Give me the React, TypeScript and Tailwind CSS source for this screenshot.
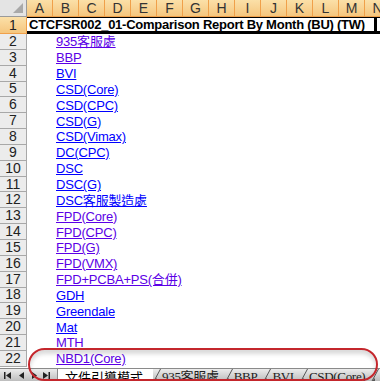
import React from "react";

const cols = ["A", "B", "C", "D", "E", "F", "G", "H", "I", "J", "K", "L", "M", "N"];

// visited links show violet, the rest plain blue
const links = [
  { text: "935客服處", v: true },
  { text: "BBP", v: true },
  { text: "BVI", v: false },
  { text: "CSD(Core)", v: false },
  { text: "CSD(CPC)", v: false },
  { text: "CSD(G)", v: false },
  { text: "CSD(Vimax)", v: false },
  { text: "DC(CPC)", v: false },
  { text: "DSC", v: false },
  { text: "DSC(G)", v: false },
  { text: "DSC客服製造處", v: false },
  { text: "FPD(Core)", v: true },
  { text: "FPD(CPC)", v: true },
  { text: "FPD(G)", v: true },
  { text: "FPD(VMX)", v: true },
  { text: "FPD+PCBA+PS(合併)", v: true },
  { text: "GDH", v: false },
  { text: "Greendale", v: false },
  { text: "Mat", v: false },
  { text: "MTH", v: true },
  { text: "NBD1(Core)", v: true },
];

const sheets = ["935客服處", "BBP", "BVI", "CSD(Core)"];

const font = { fontFamily: "'Liberation Sans', 'Noto Sans CJK TC', sans-serif" };
const serif = { fontFamily: "'Liberation Serif', 'Noto Sans CJK TC', serif" };

const NavArrows = () => (
  <svg width="58" height="13" viewBox="0 0 58 13" className="shrink-0">
    <rect x="4" y="3" width="1.5" height="7" fill="#222" />
    <path d="M6 6.5 L11 3 L11 10 Z" fill="#222" />
    <path d="M19 6.5 L24 3 L24 10 Z" fill="#222" />
    <path d="M37 6.5 L32 3 L32 10 Z" fill="#222" />
    <path d="M48 6.5 L43 3 L43 10 Z" fill="#222" />
    <rect x="48.5" y="3" width="1.5" height="7" fill="#222" />
    <rect x="57" y="0" width="1" height="13" fill="#8a8a8a" />
  </svg>
);

const Slash = () => (
  <svg width="8" height="13" viewBox="0 0 8 13" className="shrink-0">
    <path d="M0.5 13 L7.5 0" stroke="#555" strokeWidth="1" fill="none" />
    <path d="M0 13 L4 13 L4 9 Z" fill="#555" />
  </svg>
);

const App = () => {
  return (
    <div className="relative w-[380px] h-[381px] overflow-hidden bg-white flex flex-col" style={font}>
      {/* column headers */}
      <div className="flex h-[17px] shrink-0">
        <div className="relative w-[27px] shrink-0 bg-[#e4e4e4] border-r border-b border-[#9a9a9a]">
          <svg width="12" height="12" viewBox="0 0 12 12" className="absolute right-[2px] bottom-[2px]">
            <path d="M11 1 L11 11 L1 11 Z" fill="#a9a9a9" />
          </svg>
        </div>
        {cols.map((c) => (
          <div
            key={c}
            className="w-[26px] shrink-0 flex items-center justify-center text-[14px] text-[#333] bg-gradient-to-b from-[#fbe0a8] to-[#f5c67e] border-r border-b border-[#f0a04a]"
          >
            {c}
          </div>
        ))}
      </div>

      {/* row 1 */}
      <div className="flex h-[17px] shrink-0">
        <div className="w-[27px] shrink-0 flex items-center justify-center text-[14px] text-[#222] bg-gradient-to-b from-[#fbe0a8] to-[#f5c67e] border-r border-b border-[#f0a04a]">
          1
        </div>
        <div className="flex-1 border-t border-black border-b-[3px] flex items-center pl-[2px] pr-[3px] whitespace-nowrap">
          <span className="text-[13px] font-bold text-black leading-none tracking-[-0.25px]">
            CTCFSR002_01-Comparison Report By Month (BU) (TW)
          </span>
          <span className="ml-auto w-[3px] h-[14px] bg-black" />
        </div>
      </div>

      {/* rows 2..22 */}
      <div className="flex flex-col">
        {links.map((l, i) => (
          <div key={l.text} className="flex h-[15.85px] shrink-0">
            <div className="w-[27px] shrink-0 flex items-center justify-center text-[14px] text-[#222] bg-[#ececec] border-r border-b border-[#a8a8a8]">
              {i + 2}
            </div>
            <div className="flex-1 flex items-center pl-[29px] whitespace-nowrap">
              <span
                className={
                  "text-[13px] underline underline-offset-[1px] leading-none tracking-[-0.2px] " +
                  (l.v ? "text-[#5b00e6]" : "text-[#0000ff]")
                }
              >
                {l.text}
              </span>
            </div>
          </div>
        ))}
      </div>

      {/* sheet tabs */}
      <div className="absolute left-0 right-0 top-[368px] h-[13px] flex bg-gradient-to-b from-[#ececec] to-[#bdbdbd] border-t border-[#8a8a8a] text-[13px] leading-[13px] overflow-hidden">
        <NavArrows />
        <div className="bg-white pl-[7px] pt-[1px] text-black w-[95px] shrink-0 whitespace-nowrap" style={{ fontFamily: "'Noto Sans CJK TC', sans-serif" }}>
          文件引導模式
        </div>
        {sheets.map((s) => (
          <div key={s} className="flex shrink-0">
            <Slash />
            <div className="pl-[1px] pr-[6px] pt-[1px] text-[#222] whitespace-nowrap tracking-[-0.3px]" style={serif}>
              {s}
            </div>
          </div>
        ))}
        <Slash />
      </div>

      {/* red annotation outline */}
      <div className="absolute left-[28px] top-[348px] w-[350px] h-[33px] rounded-[18px] border-2 border-[#c4262c] shadow-[inset_0_4px_4px_rgba(0,0,0,0.15)]" />
    </div>
  );
};

export default App;
